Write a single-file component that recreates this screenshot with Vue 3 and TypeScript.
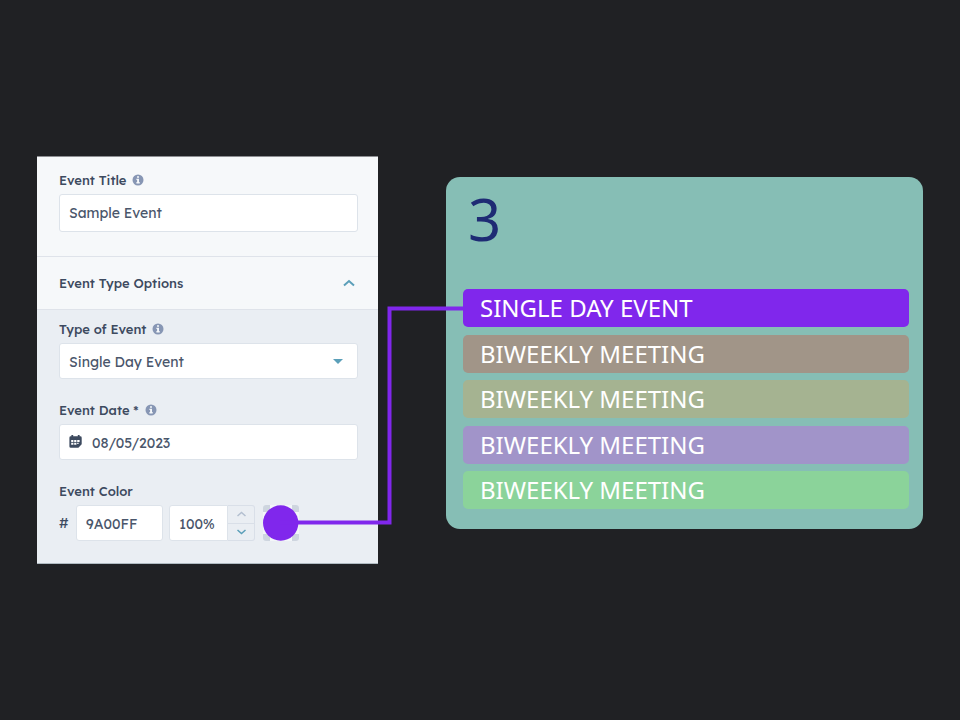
<script setup lang="ts">
import { ref } from 'vue'

interface CalendarEvent {
  id: number
  name: string
  tone: string
}

const title = ref('Sample Event')
const eventType = ref('Single Day Event')
const eventDate = ref('08/05/2023')
const hex = ref('9A00FF')
const opacity = ref(100)
const open = ref(true)

const events: CalendarEvent[] = [
  { id: 1, name: 'SINGLE DAY EVENT', tone: 'violet' },
  { id: 2, name: 'BIWEEKLY MEETING', tone: 'taupe' },
  { id: 3, name: 'BIWEEKLY MEETING', tone: 'olive' },
  { id: 4, name: 'BIWEEKLY MEETING', tone: 'lavender' },
  { id: 5, name: 'BIWEEKLY MEETING', tone: 'green' },
]

function step(amount: number) {
  opacity.value = Math.min(100, Math.max(0, opacity.value + amount))
}
</script>

<template>
  <main class="page">
    <div class="stage">
      <form class="panel" @submit.prevent>
        <section class="title-section">
          <div class="field">
            <div class="label-row">
              <label for="event-title">Event Title</label>
              <svg class="info" viewBox="0 0 12 12" aria-hidden="true">
                <circle cx="6" cy="6" r="5.5" />
                <path d="M5 2.2h2v1.6H5zM4.400 4.800H7v3.300h.7v1.300H4.400V8.100h.7v-2h-.7z" />
              </svg>
            </div>
            <input id="event-title" v-model="title" class="box" type="text" />
          </div>
        </section>

        <button class="section-toggle" type="button" :aria-expanded="open" @click="open = !open">
          <span>Event Type Options</span>
          <svg class="chevron" viewBox="0 0 12 8" aria-hidden="true">
            <path d="M1 6.5 6 2l5 4.5" />
          </svg>
        </button>

        <section v-if="open" class="options">
          <div class="field">
            <div class="label-row">
              <label for="event-type">Type of Event</label>
              <svg class="info" viewBox="0 0 12 12" aria-hidden="true">
                <circle cx="6" cy="6" r="5.5" />
                <path d="M5 2.2h2v1.6H5zM4.400 4.800H7v3.300h.7v1.300H4.400V8.100h.7v-2h-.7z" />
              </svg>
            </div>
            <div class="select-wrap">
              <select id="event-type" v-model="eventType" class="box">
                <option>Single Day Event</option>
              </select>
              <svg class="caret" viewBox="0 0 10 5" aria-hidden="true">
                <path d="M0 0h10L5 5z" />
              </svg>
            </div>
          </div>

          <div class="field">
            <div class="label-row">
              <label for="event-date">Event Date *</label>
              <svg class="info" viewBox="0 0 12 12" aria-hidden="true">
                <circle cx="6" cy="6" r="5.5" />
                <path d="M5 2.2h2v1.6H5zM4.400 4.800H7v3.300h.7v1.300H4.400V8.100h.7v-2h-.7z" />
              </svg>
            </div>
            <div class="box date-box">
              <svg class="calendar" viewBox="0 0 13 13" aria-hidden="true">
                <path
                  class="calendar-body"
                  d="M2.4 0h1.8v1.300h4.600V0h1.800v1.300h.6q1.500 0 1.500 1.400v6.500L9.400 12.800H1.800Q.4 12.800.4 11.400V2.700q0-1.400 1.400-1.400h.6z"
                />
                <path
                  class="calendar-cells"
                  d="M2.2 4.900h2.200v2H2.200zM5.200 4.900h2.200v2H5.200zM8.200 4.900h2.400v2H8.200zM2.200 7.800h2.200v2H2.200zM5.200 7.800h2.200v2H5.200zM8.200 7.800h1.400v1.300H8.200z"
                />
              </svg>
              <input id="event-date" v-model="eventDate" type="text" />
            </div>
          </div>

          <div class="field">
            <div class="label-row">
              <label for="event-color">Event Color</label>
            </div>
            <div class="color-row">
              <span class="hash">#</span>
              <input id="event-color" v-model="hex" class="box hex" type="text" />
              <div class="stepper">
                <input
                  class="box percent"
                  type="text"
                  aria-label="Opacity"
                  :value="`${opacity}%`"
                />
                <div class="steps">
                  <button type="button" class="step up" aria-label="Increase" @click="step(1)">
                    <svg viewBox="0 0 9 6" aria-hidden="true"><path d="M.5 5l4-3.500L8.500 5" /></svg>
                  </button>
                  <button type="button" class="step" aria-label="Decrease" @click="step(-1)">
                    <svg viewBox="0 0 9 6" aria-hidden="true"><path d="M.5 1l4 3.500L8.500 1" /></svg>
                  </button>
                </div>
              </div>
              <button class="swatch" type="button" aria-label="Pick a color">
                <svg viewBox="0 0 36 36" aria-hidden="true">
                  <rect class="swatch-light" width="36" height="36" rx="3" />
                  <path
                    class="swatch-dark"
                    d="M3 0h4v7H0V3q0-3 3-3zM29 0h4q3 0 3 3v4h-7zM0 29h7v7H3q-3 0-3-3zM29 29h7v4q0 3-3 3h-4z"
                  />
                  <circle cx="17.7" cy="18" r="17.7" />
                </svg>
              </button>
            </div>
          </div>
        </section>
      </form>

      <article class="day">
        <h1>3</h1>
        <ul>
          <li v-for="event in events" :key="event.id" :class="event.tone">{{ event.name }}</li>
        </ul>
      </article>

      <svg class="connector" viewBox="0 0 184 220" aria-hidden="true">
        <path d="M0 216.500H109.500V2.500H184" />
      </svg>
    </div>
  </main>
</template>

<style>
body {
  margin: 0;
  background: #202124;
}
</style>

<style scoped>
* {
  box-sizing: border-box;
}

.page {
  min-height: 100vh;
  display: flex;
  align-items: center;
  padding: 0 37px;
  background: #202124;
  font-family: Lexend, 'Lexend Deca', Inter, sans-serif;
  font-weight: 400;
  color: #3d4a5f;
}

.stage {
  position: relative;
  flex: 1;
  display: flex;
  align-items: flex-start;
  gap: 68px;
}

.panel {
  flex: 0 0 341px;
  background: #f6f8fa;
  border-top: 1px solid #8d8e92;
  border-bottom: 1px solid #b0bbc2;
}

.title-section {
  padding: 13px 20px 24px 22px;
}

.label-row {
  display: flex;
  align-items: center;
  gap: 6px;
  height: 20px;
  margin-bottom: 4px;
  font-size: 13px;
  font-weight: 500;
  line-height: 20px;
}

.info {
  width: 12px;
  height: 12px;
  margin-bottom: 1px;
}

.info circle {
  fill: #8796b4;
}

.info path {
  fill: #f4f7fa;
}

.box {
  display: block;
  width: 100%;
  height: 36px;
  padding: 0 9px;
  border: 1px solid #dde3ea;
  border-radius: 3px;
  background: #fff;
  color: #4a566b;
  font: inherit;
  font-size: 14px;
  outline: none;
}

.title-section .box {
  height: 38px;
}

.options .box {
  padding-top: 1px;
}

.section-toggle {
  display: flex;
  align-items: center;
  justify-content: space-between;
  width: 100%;
  height: 54px;
  padding: 0 23px 0 22px;
  border: 0;
  border-top: 1px solid #dfe3ea;
  border-bottom: 1px solid #dfe3ea;
  background: none;
  color: inherit;
  font: inherit;
  font-size: 13px;
  font-weight: 500;
}

.chevron {
  width: 12px;
  height: 8px;
  fill: none;
  stroke: #5b9fb9;
  stroke-width: 2;
}

.options {
  display: flex;
  flex-direction: column;
  gap: 21px;
  padding: 9px 20px 22px 22px;
  background: #eaeef3;
}

.select-wrap {
  position: relative;
}

select.box {
  appearance: none;
}

.caret {
  position: absolute;
  top: 16px;
  right: 15px;
  width: 10px;
  height: 5px;
  fill: #5b9fb9;
  pointer-events: none;
}

.date-box {
  display: flex;
  align-items: center;
  gap: 10px;
}

.date-box input {
  flex: 1;
  min-width: 0;
  padding: 0;
  border: 0;
  background: none;
  color: inherit;
  font: inherit;
  outline: none;
}

.calendar {
  width: 13px;
  height: 13px;
  margin-bottom: 3px;
}

.calendar-body {
  fill: #3d4a5f;
}

.calendar-cells {
  fill: #fff;
}

.color-row {
  display: flex;
  align-items: center;
}

.hash {
  width: 17px;
  font-size: 14px;
}

.hex {
  width: 87px;
  margin-right: 6px;
}

.stepper {
  display: flex;
  width: 86px;
  margin-right: 8px;
}

.percent {
  flex: 1;
  min-width: 0;
  border-radius: 3px 0 0 3px;
}

.steps {
  display: flex;
  flex-direction: column;
  width: 27px;
  border: 1px solid #d9dfe8;
  border-left: 0;
  border-radius: 0 3px 3px 0;
}

.step {
  flex: 1;
  display: grid;
  place-items: center;
  padding: 0;
  border: 0;
  background: none;
}

.step.up {
  border-bottom: 1px solid #d9dfe8;
}

.step svg {
  width: 9px;
  height: 6px;
  fill: none;
  stroke: #5b9fb9;
  stroke-width: 1.5;
}

.step.up svg {
  stroke: #b3bfd0;
}

.swatch {
  width: 36px;
  height: 36px;
  padding: 0;
  border: 0;
  background: none;
}

.swatch svg {
  display: block;
}

.swatch-light {
  fill: #f3f6f9;
}

.swatch-dark {
  fill: #ced5df;
}

.swatch circle {
  fill: #8027ec;
}

.day {
  flex: 1;
  min-width: 0;
  margin-top: 21px;
  padding: 7px 14px 20px 17px;
  border-radius: 14px;
  background: #86beb5;
  font-family: 'Myriad Pro', 'Noto Sans', sans-serif;
}

.day h1 {
  margin: 0 0 35px;
  padding-left: 5px;
  color: #1e2b74;
  font-size: 58px;
  font-weight: 400;
  line-height: 70px;
}

.day ul {
  display: flex;
  flex-direction: column;
  justify-content: space-between;
  min-height: 220px;
  margin: 0;
  padding: 0;
  list-style: none;
}

.day li {
  padding-left: 17px;
  border-radius: 5px;
  color: #fff;
  font-size: 24px;
  line-height: 38px;
  white-space: nowrap;
}

.violet {
  background: #8027ec;
}

.taupe {
  background: #a19588;
}

.olive {
  background: #a5b391;
}

.lavender {
  background: #a194c9;
}

.green {
  background: #8bd39a;
}

.connector {
  position: absolute;
  top: 150px;
  left: 243px;
  width: 184px;
  height: 220px;
  fill: none;
  stroke: #8027ec;
  stroke-width: 4;
  pointer-events: none;
}
</style>
